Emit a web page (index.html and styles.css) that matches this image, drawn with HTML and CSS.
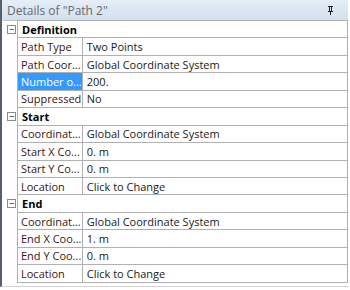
FILE: index.html
```html
<!DOCTYPE html>
<html lang="en">
<head>
<meta charset="UTF-8">
<title>Details of "Path 2"</title>
<link rel="stylesheet" href="styles.css">
</head>
<body>
  <div class="panel">
    <div class="title">
      <span>Details of "Path 2"</span>
      <svg class="pin" width="7" height="9" viewBox="0 0 7 9">
        <path d="M1 0h5v1h-1v4h1v1H1V5h1V1H1z M3 1h1v4H3z" fill="#222" fill-rule="evenodd"/>
        <rect x="3" y="6" width="1" height="3" fill="#222"/>
      </svg>
    </div>
    <table class="details">
      <tr class="group">
        <td class="gutter"><span class="toggle">−</span></td>
        <td colspan="2">Definition</td>
      </tr>
      <tr><td class="gutter"></td><td class="name">Path Type</td><td class="value">Two Points</td></tr>
      <tr><td class="gutter"></td><td class="name">Path Coor...</td><td class="value">Global Coordinate System</td></tr>
      <tr><td class="gutter"></td><td class="name selected">Number o...</td><td class="value">200.</td></tr>
      <tr><td class="gutter"></td><td class="name">Suppressed</td><td class="value">No</td></tr>
      <tr class="group">
        <td class="gutter"><span class="toggle">−</span></td>
        <td colspan="2">Start</td>
      </tr>
      <tr><td class="gutter"></td><td class="name">Coordinat...</td><td class="value">Global Coordinate System</td></tr>
      <tr><td class="gutter"></td><td class="name">Start X Co...</td><td class="value">0. m</td></tr>
      <tr><td class="gutter"></td><td class="name">Start Y Co...</td><td class="value">0. m</td></tr>
      <tr><td class="gutter"></td><td class="name">Location</td><td class="value">Click to Change</td></tr>
      <tr class="group">
        <td class="gutter"><span class="toggle">−</span></td>
        <td colspan="2">End</td>
      </tr>
      <tr><td class="gutter"></td><td class="name">Coordinat...</td><td class="value">Global Coordinate System</td></tr>
      <tr><td class="gutter"></td><td class="name">End X Coo...</td><td class="value">1. m</td></tr>
      <tr><td class="gutter"></td><td class="name">End Y Coo...</td><td class="value">0. m</td></tr>
      <tr><td class="gutter"></td><td class="name">Location</td><td class="value">Click to Change</td></tr>
    </table>
  </div>
</body>
</html>
```

FILE: styles.css
```css
body {
  margin: 0;
  background: #ffffff;
  font-family: "Open Sans", "Noto Sans", sans-serif;
  font-size: 11px;
}

.panel {
  width: 348px;
  height: 287px;
  border-left: 2px solid #56606c;
  border-bottom: 1px solid #d4d4d4;
  box-sizing: border-box;
}

.title {
  height: 20px;
  display: flex;
  align-items: center;
  justify-content: space-between;
  padding: 0 14px 0 5px;
  background: linear-gradient(#e6eef7, #d2e0ef);
  color: #6a6a6a;
  font-size: 12px;
}

.pin {
  display: block;
}

.details {
  border-collapse: collapse;
  margin-left: 1px;
  width: 345px;
  border-top: 1px solid #c4c4c4;
}

.details td {
  height: 16.45px;
  padding: 0 0 0 4px;
  border: 1px solid #b0b0b0;
  white-space: nowrap;
  color: #1a1a1a;
}

.details td.gutter {
  width: 10px;
  border: none;
  padding: 0 0 0 4px;
  vertical-align: middle;
}

.details td.name {
  width: 58px;
  padding-left: 3px;
  color: #3c1414;
}

.details td.selected {
  background: #3399ff;
  color: #ffffff;
}

.group td {
  font-weight: bold;
  color: #000000;
}

.toggle {
  display: flex;
  align-items: center;
  justify-content: center;
  width: 7px;
  height: 7px;
  border: 1px solid #8a8a8a;
  font-size: 9px;
  line-height: 1;
  font-weight: normal;
  color: #000;
}
```
